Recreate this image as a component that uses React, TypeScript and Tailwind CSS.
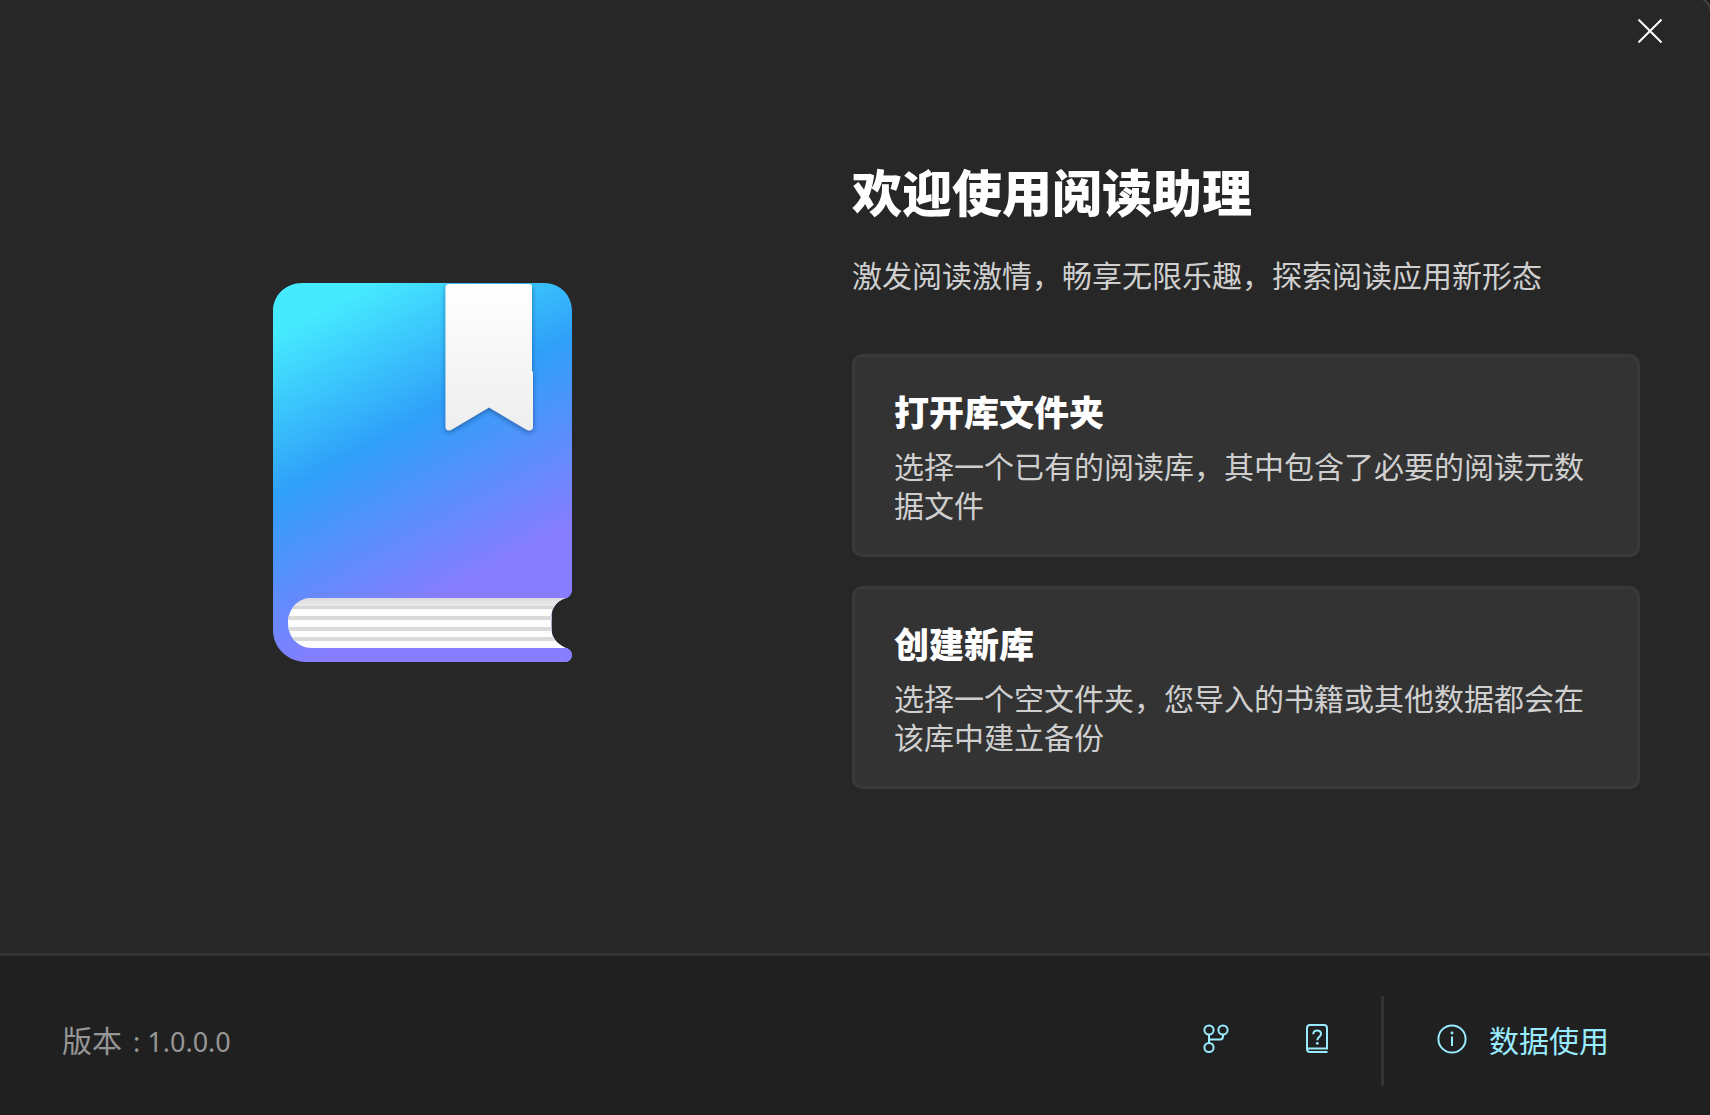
import React from "react";

function BookLogo() {
  return (
    <svg viewBox="0 0 300 380" className="h-[380px] w-[300px] shrink-0" role="img" aria-label="阅读助理">
      <defs>
        <linearGradient id="cover" gradientUnits="userSpaceOnUse" x1="26" y1="48" x2="173" y2="321">
          <stop offset="0" stopColor="#46eaff" />
          <stop offset="0.46" stopColor="#2fa0f9" />
          <stop offset="1" stopColor="#877dff" />
        </linearGradient>
        <linearGradient id="ribbon" x1="0" y1="0" x2="0" y2="1">
          <stop offset="0" stopColor="#ffffff" />
          <stop offset="1" stopColor="#eeeeef" />
        </linearGradient>
        <linearGradient id="topPage" x1="0" y1="0" x2="0" y2="1">
          <stop offset="0" stopColor="#d9d9d9" />
          <stop offset="1" stopColor="#ebebeb" />
        </linearGradient>
        <filter id="shadow" x="-20%" y="-20%" width="140%" height="140%">
          <feDropShadow dx="0" dy="2" stdDeviation="2.5" floodColor="#0b2b60" floodOpacity="0.5" />
        </filter>
        <clipPath id="pages">
          <path d="M39 325H292C282 329 279 336 278.500 342V357C279 366 285 371 293 375H39C25 375 15 364 15 350S25 325 39 325Z" />
        </clipPath>
      </defs>
      <g transform="translate(0 -10)">
        <path
          d="M29 10H271C287 10 299 22 299 38V316C299 321 296 325 291 326L281 335V366L291 374C296 375 299 378 299 382C299 386 296 389 292 389H33C15 389 0 375 0 357V38C0 22 13 10 29 10Z"
          fill="url(#cover)"
        />
        <path d="M302 325H291C282 330 278.500 337 278.500 343V356C279 366 284 370 292 375H302Z" fill="#272727" />
        <path
          d="M299 310V316C299 321 296 325 291 326L286 320ZM288 374C296 375 299 378 299 382C299 386 296 389 292 389H280Z"
          fill="#877dff"
        />
        <g clipPath="url(#pages)">
          <rect x="14" y="324" width="286" height="52" fill="#fdfdfd" />
          <rect x="14" y="324" width="286" height="9" fill="url(#topPage)" />
          <rect x="14" y="333" width="286" height="3" fill="#d7d7d7" />
          <rect x="14" y="343" width="286" height="4" fill="#dadada" />
          <rect x="14" y="354" width="286" height="4" fill="#dadada" />
          <rect x="14" y="364" width="286" height="4" fill="#dadada" />
        </g>
        <path
          d="M176 11H256C258 11 259 12 259 14V98L260 99V154C260 157 257 158 254 157L216 134.500L178 157C175 158 172.500 157 172.500 154V14C172.500 12 174 11 176 11Z"
          fill="url(#ribbon)"
          filter="url(#shadow)"
        />
      </g>
    </svg>
  );
}

function ForkIcon() {
  return (
    <svg viewBox="0 0 26 30" className="h-[30px] w-[26px]" fill="none" stroke="currentColor" strokeWidth="2" aria-hidden="true">
      <circle cx="6" cy="6" r="4.600" />
      <circle cx="20" cy="6" r="4.600" />
      <circle cx="6" cy="23.500" r="4.600" />
      <path d="M6 10.600V19M6 15.500H17C19 15.500 20 14 20 12V10.600" />
    </svg>
  );
}

function HelpBookIcon() {
  return (
    <svg viewBox="0 0 22 30" className="h-[30px] w-[22px]" fill="none" stroke="currentColor" strokeWidth="2" aria-hidden="true">
      <path d="M21.500 28H4C2 28 1 27 1 25V4C1 2 2 1 4 1H18C20 1 21 2 21 4V24.500H1.500" />
      <path d="M7.300 10.200C7.300 7.800 8.800 6.500 11.200 6.500S15 7.900 15 10C15 12.700 11.300 13 11.300 16.300" />
      <circle cx="11.300" cy="19.300" r="1.400" fill="currentColor" stroke="none" />
    </svg>
  );
}

function InfoIcon() {
  return (
    <svg viewBox="0 0 30 30" className="h-[30px] w-[30px]" fill="none" stroke="currentColor" strokeWidth="2" aria-hidden="true">
      <circle cx="15" cy="15" r="13.600" />
      <path d="M15 12.500V22" />
      <circle cx="15" cy="9" r="1.400" fill="currentColor" stroke="none" />
    </svg>
  );
}

const options = [
  { title: "打开库文件夹", text: "选择一个已有的阅读库，其中包含了必要的阅读元数据文件" },
  { title: "创建新库", text: "选择一个空文件夹，您导入的书籍或其他数据都会在该库中建立备份" },
];

export default function App() {
  return (
    <div className="relative flex min-h-screen flex-col bg-[#272727] font-['Noto_Sans_CJK_SC',sans-serif] text-white">
      <div className="pointer-events-none absolute inset-0 overflow-hidden" aria-hidden="true">
        <svg viewBox="0 0 12 16" className="ml-auto h-4 w-3">
          <path d="M4 0C8 2 11 6 12 12V0Z" fill="#414141" />
          <path d="M8 0C10 1 11 3 12 5V0Z" fill="#1c1c1c" />
        </svg>
      </div>

      <header className="flex h-[62px] shrink-0 justify-end px-[30px]">
        <button type="button" aria-label="关闭" className="flex w-[60px] items-center justify-center">
          <svg viewBox="0 0 24 24" className="h-6 w-6" fill="none" stroke="currentColor" strokeWidth="2" aria-hidden="true">
            <path d="M0.500 0.500L23.500 23.500M23.500 0.500L0.500 23.500" />
          </svg>
        </button>
      </header>

      <main className="grid flex-1 grid-cols-[845fr_865fr]">
        <div className="flex items-center justify-center pb-[70px]">
          <BookLogo />
        </div>
        <section className="flex flex-col pt-[96px] pr-[70px] pl-[7px]">
          <h1 className="text-[50px] leading-[64px] font-black">欢迎使用阅读助理</h1>
          <p className="mt-[32px] text-[30px] leading-[40px] text-[#cfcfcf]">激发阅读激情，畅享无限乐趣，探索阅读应用新形态</p>
          <div className="mt-[60px] flex flex-col gap-[29px]">
            {options.map((o) => (
              <button
                key={o.title}
                type="button"
                className="rounded-[10px] border-3 border-[#393939] bg-[#333333] px-[39px] pt-[31px] pb-[30px] text-left"
              >
                <span className="block text-[35px] leading-[46px] font-black">{o.title}</span>
                <span className="mt-[12px] block text-[30px] leading-[39px] text-[#cfcfcf]">{o.text}</span>
              </button>
            ))}
          </div>
        </section>
      </main>

      <footer className="flex h-[162px] shrink-0 items-center border-t-3 border-[#333333] bg-[#202020] pt-[10px] pr-[101px] pl-[62px]">
        <p className="flex-1 text-[30px] leading-[40px] text-[#969696]">
          版本<span className="ml-1 font-['Noto_Sans',sans-serif] text-[27px]"> : 1.0.0.0</span>
        </p>
        <nav className="flex items-center text-[#99ebff]">
          <a href="#source" aria-label="源代码" className="flex w-[101px] justify-center pb-1">
            <ForkIcon />
          </a>
          <a href="#help" aria-label="帮助" className="flex w-[101px] justify-center pb-1">
            <HelpBookIcon />
          </a>
          <span className="ml-[14px] h-[90px] w-[3px] bg-[#333333]" />
          <a href="#data" className="ml-[53px] flex items-center gap-[22px] pb-1 text-[30px] leading-[40px]">
            <InfoIcon />
            数据使用
          </a>
        </nav>
      </footer>
    </div>
  );
}
